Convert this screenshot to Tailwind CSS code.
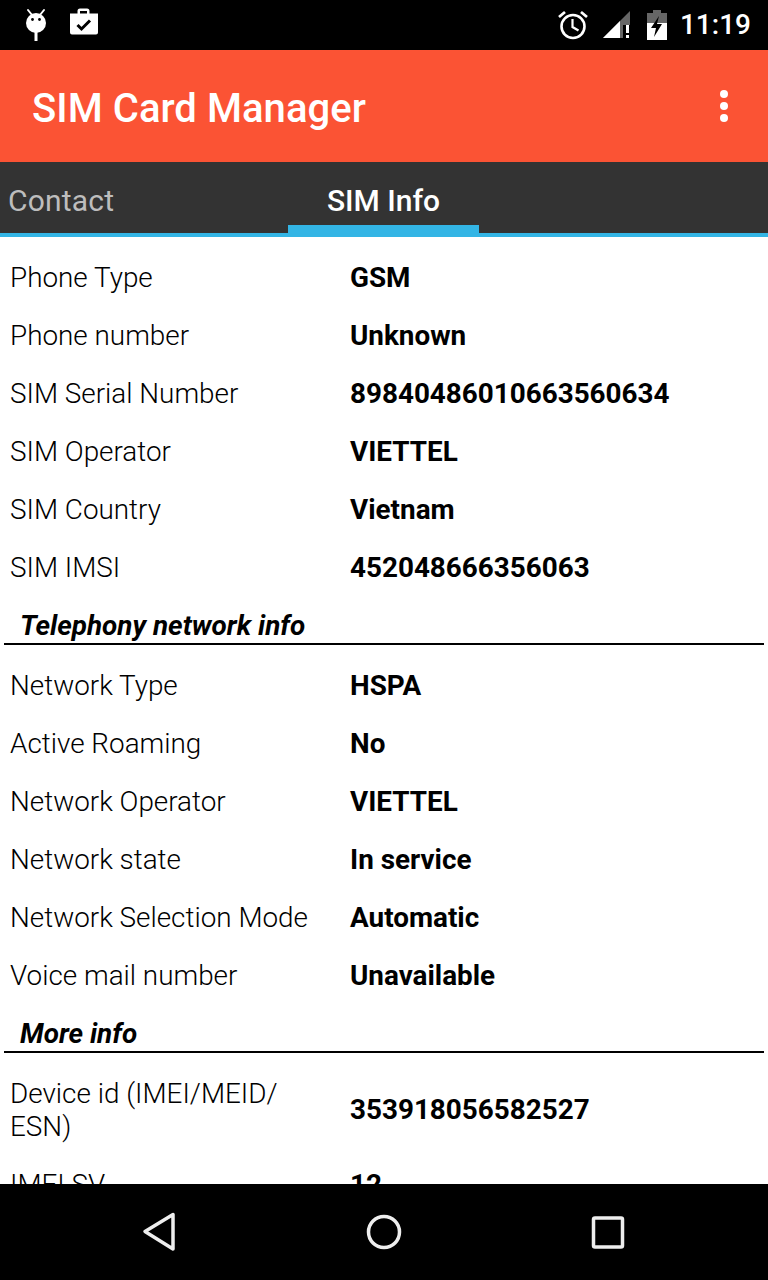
<!DOCTYPE html>
<html lang="en">
<head>
  <meta charset="UTF-8" />
  <meta name="viewport" content="width=device-width, initial-scale=1.0"/>
  <title>SIM Card Manager</title>
  <script src="https://cdn.jsdelivr.net/npm/@tailwindcss/browser@4"></script>
</head>
<body class="w-[768px] h-[1280px] overflow-hidden bg-white font-['Roboto',sans-serif]">
  <div class="flex flex-col h-[1280px]">

    <!-- status bar -->
    <div class="h-[50px] bg-black flex items-center justify-between shrink-0">
      <div class="flex items-center">
        <svg class="ml-[22px]" width="30" height="40" viewBox="0 0 30 40">
          <path d="M6 5 L10 10 M22 5 L18 10" stroke="#fff" stroke-width="2" stroke-linecap="round"/>
          <circle cx="14" cy="18" r="10" fill="#fff"/>
          <circle cx="10.5" cy="14.5" r="1.4" fill="#000"/>
          <circle cx="17.5" cy="14.5" r="1.4" fill="#000"/>
          <rect x="12.5" y="27" width="3" height="9" fill="#fff"/>
        </svg>
        <svg class="ml-[17px] -mt-[4px]" width="30" height="30" viewBox="0 0 30 30">
          <path d="M1 5.5 H8.5 V3 Q8.5 0.5 11 0.5 H18 Q20.5 0.5 20.5 3 V5.5 H29 V24.5 Q29 26.5 27 26.5 H3 Q1 26.5 1 24.5 Z M11 5.5 H18 V3 H11 Z" fill="#fff" fill-rule="evenodd"/>
          <path d="M8.5 17 L12.5 21 L21 12.5" fill="none" stroke="#000" stroke-width="3"/>
        </svg>
      </div>
      <div class="flex items-center">
        <svg width="32" height="32" viewBox="0 0 32 32">
          <circle cx="16" cy="17.5" r="11.5" fill="none" stroke="#fff" stroke-width="2.6"/>
          <path d="M15.5 10 V18 L21.5 21.5" fill="none" stroke="#fff" stroke-width="2.2"/>
          <path d="M2 8 L8 3 M30 8 L24 3" stroke="#fff" stroke-width="2.8"/>
        </svg>
        <svg class="ml-[13px]" width="30" height="30" viewBox="0 0 30 30">
          <path d="M1 28 L28 1 V28 Z" fill="#666"/>
          <path d="M1 28 L18 11 V28 Z" fill="#fff"/>
          <rect x="21" y="15" width="8" height="15" fill="#000"/>
          <rect x="24" y="15" width="3" height="8" fill="#fff"/>
          <rect x="24" y="25" width="3" height="3" fill="#fff"/>
        </svg>
        <svg class="ml-[15px]" width="20" height="30" viewBox="0 0 20 30">
          <path d="M6 0 H14 V3 H20 V30 H0 V3 H6 Z" fill="#666"/>
          <rect x="0" y="13" width="20" height="17" fill="#fff"/>
          <path d="M12 6 L4 18 H9 L7 27 L15 14 H10 Z" fill="#000"/>
        </svg>
        <span class="ml-[13px] mr-[17px] text-white text-[28px] font-medium leading-[50px]">11:19</span>
      </div>
    </div>

    <!-- app bar -->
    <div class="h-[112px] bg-[#fb5334] flex items-center justify-between shrink-0">
      <h1 class="ml-[32px] mt-[5px] text-white text-[40px] font-medium leading-none tracking-[0.06px]">SIM Card Manager</h1>
      <div class="mr-[40px] flex flex-col gap-[4px]">
        <span class="w-[8px] h-[8px] rounded-full bg-white"></span>
        <span class="w-[8px] h-[8px] rounded-full bg-white"></span>
        <span class="w-[8px] h-[8px] rounded-full bg-white"></span>
      </div>
    </div>

    <!-- tabs -->
    <div class="h-[75px] bg-[#333333] border-b-4 border-[#33b5e5] shrink-0 relative flex">
      <div class="w-[288px] pl-[8px] text-[#bdbdbd] text-[30px] tracking-[0.2px] leading-[78px]">Contact</div>
      <div class="w-[191px] text-center text-white text-[30px] font-medium leading-[78px] border-b-8 border-[#33b5e5] h-[71px]">SIM Info</div>
    </div>

    <!-- content -->
    <div class="flex-1 overflow-hidden pt-[11px] text-black text-[27.85px]">
      <div class="grid grid-cols-[340px_1fr] pl-[10px] py-[12.5px] leading-[33px] items-center font-light"><span>Phone Type</span><span class="font-bold">GSM</span></div>
      <div class="grid grid-cols-[340px_1fr] pl-[10px] py-[12.5px] leading-[33px] items-center font-light"><span>Phone number</span><span class="font-bold">Unknown</span></div>
      <div class="grid grid-cols-[340px_1fr] pl-[10px] py-[12.5px] leading-[33px] items-center font-light"><span>SIM Serial Number</span><span class="font-bold">89840486010663560634</span></div>
      <div class="grid grid-cols-[340px_1fr] pl-[10px] py-[12.5px] leading-[33px] items-center font-light"><span>SIM Operator</span><span class="font-bold">VIETTEL</span></div>
      <div class="grid grid-cols-[340px_1fr] pl-[10px] py-[12.5px] leading-[33px] items-center font-light"><span>SIM Country</span><span class="font-bold">Vietnam</span></div>
      <div class="grid grid-cols-[340px_1fr] pl-[10px] py-[12.5px] leading-[33px] items-center font-light"><span>SIM IMSI</span><span class="font-bold">452048666356063</span></div>

      <div class="mx-[4px] mb-[11px] h-[49px] border-b-2 border-black pl-[16px] pt-[13px] leading-[33px] font-bold italic">Telephony network info</div>

      <div class="grid grid-cols-[340px_1fr] pl-[10px] py-[12.5px] leading-[33px] items-center font-light"><span>Network Type</span><span class="font-bold">HSPA</span></div>
      <div class="grid grid-cols-[340px_1fr] pl-[10px] py-[12.5px] leading-[33px] items-center font-light"><span>Active Roaming</span><span class="font-bold">No</span></div>
      <div class="grid grid-cols-[340px_1fr] pl-[10px] py-[12.5px] leading-[33px] items-center font-light"><span>Network Operator</span><span class="font-bold">VIETTEL</span></div>
      <div class="grid grid-cols-[340px_1fr] pl-[10px] py-[12.5px] leading-[33px] items-center font-light"><span>Network state</span><span class="font-bold">In service</span></div>
      <div class="grid grid-cols-[340px_1fr] pl-[10px] py-[12.5px] leading-[33px] items-center font-light"><span>Network Selection Mode</span><span class="font-bold">Automatic</span></div>
      <div class="grid grid-cols-[340px_1fr] pl-[10px] py-[12.5px] leading-[33px] items-center font-light"><span>Voice mail number</span><span class="font-bold">Unavailable</span></div>

      <div class="mx-[4px] mb-[11px] h-[49px] border-b-2 border-black pl-[16px] pt-[13px] leading-[33px] font-bold italic">More info</div>

      <div class="grid grid-cols-[340px_1fr] pl-[10px] py-[12.5px] leading-[33px] items-center font-light"><span class="w-[300px]">Device id (IMEI/MEID/ ESN)</span><span class="font-bold">353918056582527</span></div>
      <div class="grid grid-cols-[340px_1fr] pl-[10px] py-[12.5px] leading-[33px] items-center font-light"><span>IMEI SV</span><span class="font-bold">12</span></div>
    </div>

    <!-- nav bar -->
    <div class="h-[96px] bg-black shrink-0 relative flex items-center">
      <svg class="ml-[139px]" width="40" height="40" viewBox="0 0 40 40">
        <path d="M6 19.5 L34 2.5 V37 Z" fill="none" stroke="#eeeeee" stroke-width="3.5" stroke-linejoin="round"/>
      </svg>
      <svg class="ml-[185px]" width="40" height="40" viewBox="0 0 40 40">
        <circle cx="20" cy="20" r="15.5" fill="none" stroke="#eeeeee" stroke-width="3.5"/>
      </svg>
      <svg class="ml-[184px]" width="40" height="40" viewBox="0 0 40 40">
        <rect x="5.5" y="6" width="29" height="29" rx="1.5" fill="none" stroke="#eeeeee" stroke-width="3.5"/>
      </svg>
    </div>
  </div>
</body>
</html>
